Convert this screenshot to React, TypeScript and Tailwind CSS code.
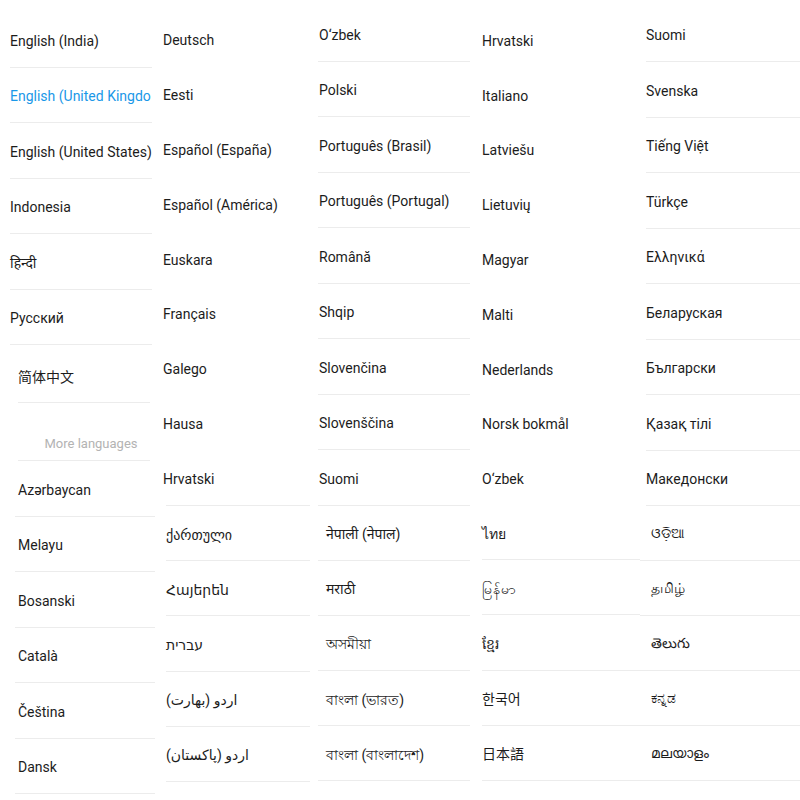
import React from "react";

type Section = {
  box: string;
  row: string;
  rowLine: string;
  pad: string;
  items: string[];
};

type Column = {
  width: string;
  sections: Section[];
};

const LINE = "border-b border-[#ececec]";

const COLUMNS: Column[] = [
  {
    width: "w-[155px]",
    sections: [
      {
        box: "pt-[12px]",
        row: "h-[55.5px]",
        rowLine: `${LINE} ml-[10px] mr-[3px]`,
        pad: "pl-0",
        items: [
          "English (India)",
          "English (United Kingdo",
          "English (United States)",
          "Indonesia",
          "हिन्दी",
          "Русский",
        ],
      },
      {
        box: "",
        row: "h-[58px] pt-[8px]",
        rowLine: `${LINE} ml-[18px] mr-[5px]`,
        pad: "pl-0",
        items: ["简体中文"],
      },
    ],
  },
  {
    width: "w-[155px]",
    sections: [
      {
        box: "h-[505px] pt-[11px] overflow-hidden",
        row: "h-[55.5px] pt-[4px]",
        rowLine: "",
        pad: "pl-[8px]",
        items: [
          "Deutsch",
          "Eesti",
          "Español (España)",
          "Español (América)",
          "Euskara",
          "Français",
          "Galego",
          "Hausa",
          "Hrvatski",
        ],
      },
      {
        box: "border-t border-[#ececec] ml-[11px]",
        row: "h-[55.2px] pt-[4px]",
        rowLine: LINE,
        pad: "pl-0",
        items: ["ქართული", "Հայերեն", "עברית", "اردو (بھارت)", "اردو (پاکستان)"],
      },
    ],
  },
  {
    width: "w-[160px]",
    sections: [
      {
        box: "pt-[6px]",
        row: "h-[55.5px] pt-[4px]",
        rowLine: `${LINE} ml-[8px]`,
        pad: "pl-[1px]",
        items: [
          "O‘zbek",
          "Polski",
          "Português (Brasil)",
          "Português (Portugal)",
          "Română",
          "Shqip",
          "Slovenčina",
          "Slovenščina",
          "Suomi",
        ],
      },
      {
        box: "",
        row: "h-[55.2px] pt-[4px]",
        rowLine: `${LINE} ml-[8px]`,
        pad: "pl-[8px]",
        items: ["नेपाली (नेपाल)", "मराठी", "অসমীয়া", "বাংলা (ভারত)", "বাংলা (বাংলাদেশ)"],
      },
    ],
  },
  {
    width: "w-[170px]",
    sections: [
      {
        box: "h-[505px] pt-[12px] overflow-hidden",
        row: "h-[55.4px] pt-[4px]",
        rowLine: "",
        pad: "pl-[12px]",
        items: [
          "Hrvatski",
          "Italiano",
          "Latviešu",
          "Lietuvių",
          "Magyar",
          "Malti",
          "Nederlands",
          "Norsk bokmål",
          "O‘zbek",
        ],
      },
      {
        box: "",
        row: "h-[55.2px] pt-[4px]",
        rowLine: `${LINE} ml-[12px]`,
        pad: "pl-0",
        items: ["ไทย", "မြန်မာ", "ខ្មែរ", "한국어", "日本語"],
      },
    ],
  },
  {
    width: "w-[160px]",
    sections: [
      {
        box: "pt-[6.5px]",
        row: "h-[55.5px] pt-[4px]",
        rowLine: `${LINE} ml-[6px]`,
        pad: "pl-0",
        items: [
          "Suomi",
          "Svenska",
          "Tiếng Việt",
          "Türkçe",
          "Ελληνικά",
          "Беларуская",
          "Български",
          "Қазақ тілі",
          "Македонски",
        ],
      },
      {
        box: "",
        row: "h-[55px]",
        rowLine: LINE,
        pad: "pl-[11px]",
        items: ["ଓଡ଼ିଆ", "தமிழ்", "తెలుగు", "ಕನ್ನಡ", "മലയാളം"],
      },
    ],
  },
];

const MORE = [
  "Azərbaycan",
  "Melayu",
  "Bosanski",
  "Català",
  "Čeština",
  "Dansk",
];

function Row({ text, row, rowLine, pad }: { text: string; row: string; rowLine: string; pad: string }) {
  const selected = text === "English (United Kingdo";
  return (
    <div className={`flex items-center ${row} ${rowLine}`}>
      <span
        className={`${pad} whitespace-nowrap text-[14px] ${
          selected ? "text-[#1a98e8]" : "text-[#1c1c1c]"
        }`}
      >
        {text}
      </span>
    </div>
  );
}

export default function App() {
  return (
    <div
      className="flex w-[800px] h-[800px] overflow-hidden bg-white"
      style={{
        fontFamily:
          'Roboto, "Noto Sans", "DejaVu Sans", "Noto Sans CJK SC", "Noto Sans CJK KR", "Noto Sans CJK JP", sans-serif',
      }}
    >
      {COLUMNS.map((col, ci) => (
        <div key={ci} className={`flex flex-col shrink-0 ${col.width}`}>
          {col.sections.map((s, si) => (
            <div key={si} className={`flex flex-col ${s.box}`}>
              {s.items.map((t) => (
                <Row
                  key={t}
                  text={t}
                  row={ci === 0 && si === 0 ? `${s.row} pt-[4px]` : s.row}
                  rowLine={s.rowLine}
                  pad={s.pad}
                />
              ))}
            </div>
          ))}

          {ci === 0 && (
            <>
              {/* More languages divider */}
              <div className={`flex items-end justify-center h-[58px] pb-[7px] pl-[14px] ${LINE} ml-[18px] mr-[5px]`}>
                <span className="text-[13px] text-[#b3b3b3]">More languages</span>
              </div>
              <div className="flex flex-col">
                {MORE.map((t) => (
                  <Row key={t} text={t} row="h-[55.5px] pt-[4px]" rowLine={`${LINE} ml-[15px]`} pad="pl-[3px]" />
                ))}
              </div>
            </>
          )}
        </div>
      ))}
    </div>
  );
}
